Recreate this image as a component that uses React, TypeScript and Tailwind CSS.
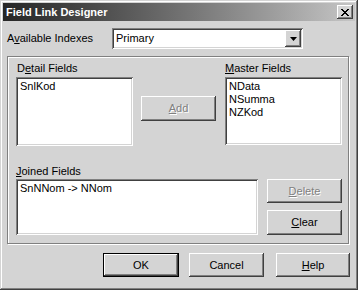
import React from "react";

const raised =
  "shadow-[inset_-1px_-1px_0_#404040,inset_1px_1px_0_#ffffff,inset_-2px_-2px_0_#808080,inset_2px_2px_0_#d4d4d4]";
const sunken =
  "shadow-[inset_1px_1px_0_#808080,inset_-1px_-1px_0_#ffffff,inset_2px_2px_0_#404040,inset_-2px_-2px_0_#d4d4d4]";

function U({ children }: { children: React.ReactNode }) {
  return <span className="underline underline-offset-[1px] decoration-1">{children}</span>;
}

function Btn({
  children,
  disabled,
  className = "",
}: {
  children: React.ReactNode;
  disabled?: boolean;
  className?: string;
}) {
  return (
    <div
      className={`flex items-center justify-center bg-[#d4d4d4] ${raised} ${
        disabled ? "text-[#808080] [text-shadow:1px_1px_0_#ffffff]" : "text-black"
      } ${className}`}
    >
      {children}
    </div>
  );
}

function ListBox({ items, className = "" }: { items: string[]; className?: string }) {
  return (
    <div className={`bg-white ${sunken} pt-[3px] pl-[4px] ${className}`}>
      {items.map((it) => (
        <div key={it} className="h-[13px] leading-[13px] whitespace-nowrap">
          {it}
        </div>
      ))}
    </div>
  );
}

export default function App() {
  return (
    <div className="w-[358px] h-[290px] bg-[#d4d4d4] p-[3px] text-[11px] leading-[13px] text-black font-['Liberation_Sans',Arial,sans-serif] shadow-[inset_-1px_-1px_0_#404040,inset_1px_1px_0_#d4d4d4,inset_-2px_-2px_0_#808080,inset_2px_2px_0_#ffffff]">
      {/* Title bar */}
      <div className="h-[18px] flex items-center justify-between pl-[3px] pr-[2px] bg-gradient-to-r from-[#262626] to-[#c6c6c6]">
        <span className="text-white font-bold text-[11px] leading-[13px]">Field Link Designer</span>
        <div className={`w-[16px] h-[14px] bg-[#d4d4d4] ${raised} flex items-center justify-center`}>
          <svg width="8" height="7" viewBox="0 0 8 7">
            <path d="M0 0h2v1h1v1h2V1h1V0h2v1H7v1H6v1H5v1h1v1h1v1h1v1H6V6H5V5H3v1H2v1H0V6h1V5h1V4h1V3H2V2H1V1H0z" fill="#000" />
          </svg>
        </div>
      </div>

      {/* Available indexes row */}
      <div className="mt-[7px] flex items-center h-[21px]">
        <div className="w-[109px] pl-[4px]">
          A<U>v</U>ailable Indexes
        </div>
        <div className={`w-[191px] h-[21px] bg-white ${sunken} flex items-center justify-between p-[2px]`}>
          <span className="pl-[2px]">Primary</span>
          <div className={`w-[16px] h-[17px] bg-[#d4d4d4] ${raised} flex items-center justify-center`}>
            <svg width="7" height="4" viewBox="0 0 7 4">
              <path d="M0 0h7L3.5 4z" fill="#000" />
            </svg>
          </div>
        </div>
      </div>

      {/* Group box */}
      <div className="mt-[7px] ml-[4px] w-[342px] h-[188px] border border-[#808080] shadow-[inset_1px_1px_0_#ffffff,1px_1px_0_#ffffff] pt-[5px] pl-[8px]">
        <div className="flex">
          <div className="w-[117px]">
            <div className="h-[13px] pl-[1px]">
              D<U>e</U>tail Fields
            </div>
            <ListBox items={["SnlKod"]} className="mt-[2px] h-[69px]" />
          </div>
          <Btn disabled className="ml-[8px] mt-[34px] w-[75px] h-[25px]">
            <span>
              <U>A</U>dd
            </span>
          </Btn>
          <div className="ml-[9px] w-[117px]">
            <div className="h-[13px]">
              <U>M</U>aster Fields
            </div>
            <ListBox items={["NData", "NSumma", "NZKod"]} className="mt-[2px] h-[68px]" />
          </div>
        </div>

        <div className="mt-[19px] flex">
          <div className="w-[242px]">
            <div className="h-[13px]">
              <U>J</U>oined Fields
            </div>
            <ListBox items={["SnNNom -> NNom"]} className="mt-[1px] h-[56px]" />
          </div>
          <div className="ml-[9px] mt-[14px] flex flex-col gap-[7px]">
            <Btn disabled className="w-[75px] h-[24px]">
              <span>
                <U>D</U>elete
              </span>
            </Btn>
            <Btn className="w-[75px] h-[25px]">
              <span>
                <U>C</U>lear
              </span>
            </Btn>
          </div>
        </div>
      </div>

      {/* Bottom buttons */}
      <div className="mt-[9px] flex">
        <div className="ml-[100px] w-[76px] h-[24px] border border-black">
          <Btn className="w-full h-full">OK</Btn>
        </div>
        <Btn className="ml-[10px] w-[75px] h-[24px]">Cancel</Btn>
        <Btn className="ml-[12px] w-[74px] h-[24px]">
          <span>
            <U>H</U>elp
          </span>
        </Btn>
      </div>
    </div>
  );
}
